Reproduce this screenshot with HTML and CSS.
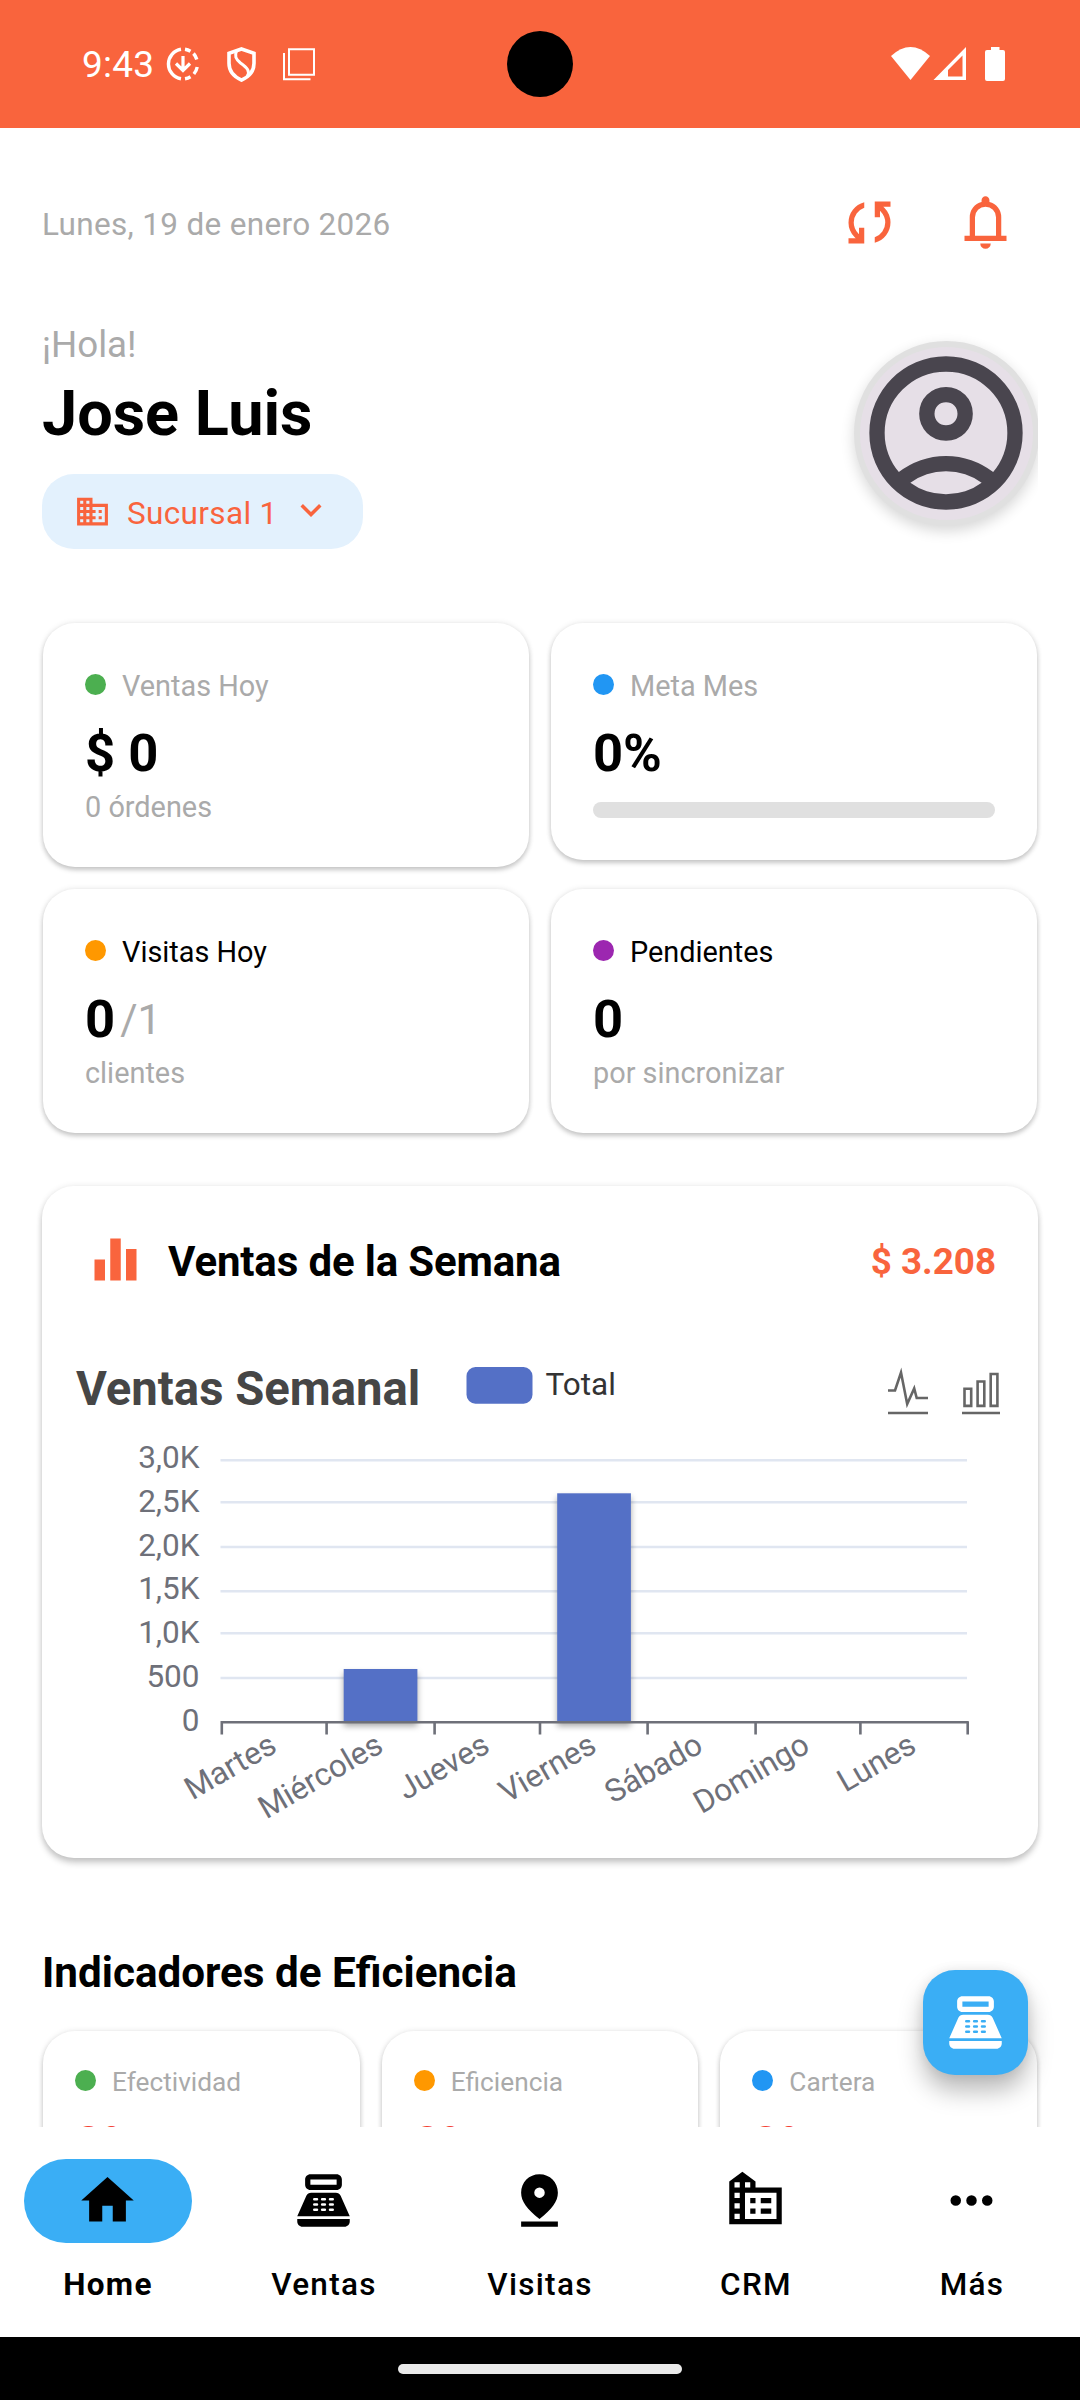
FILE: index.html
```html
<!DOCTYPE html>
<html lang="es">
<head>
    <meta charset="UTF-8">
    <meta name="viewport" content="width=device-width, initial-scale=1.0">
    <title>Home</title>
    <link rel="stylesheet" href="styles.css">
</head>

<body>
<!-- shared icons -->
<svg class="sprite">
    <symbol id="pos" viewBox="0 0 24 24">
        <path fill-rule="evenodd" d="M17 2H7c-1.1 0-2 .9-2 2v2c0 1.1.9 2 2 2h10c1.1 0 2-.9 2-2V4c0-1.1-.9-2-2-2zm0 4H7V4h10v2zM20 22H4c-1.1 0-2-.9-2-2v-1h20v1c0 1.1-.9 2-2 2zM18.53 10.19C18.21 9.47 17.49 9 16.7 9H7.3c-.79 0-1.51.47-1.83 1.19L2 18h20zM8.5 11h1a.5.5 0 0 1 0 1h-1a.5.5 0 0 1 0-1zm3 0h1a.5.5 0 0 1 0 1h-1a.5.5 0 0 1 0-1zm3 0h1a.5.5 0 0 1 0 1h-1a.5.5 0 0 1 0-1zm-6 2h1a.5.5 0 0 1 0 1h-1a.5.5 0 0 1 0-1zm3 0h1a.5.5 0 0 1 0 1h-1a.5.5 0 0 1 0-1zm3 0h1a.5.5 0 0 1 0 1h-1a.5.5 0 0 1 0-1zm-6 2h1a.5.5 0 0 1 0 1h-1a.5.5 0 0 1 0-1zm3 0h1a.5.5 0 0 1 0 1h-1a.5.5 0 0 1 0-1zm3 0h1a.5.5 0 0 1 0 1h-1a.5.5 0 0 1 0-1z"/>
    </symbol>
</svg>

<header class="status-bar">
    <span class="clock">9:43</span>
    <svg class="status-left" width="150" height="36" viewBox="166 47 150 36" fill="none" stroke="#fff">
        <path stroke-width="3.4" d="M181 50.2a15 15 0 0 0 0 29.6M185 50.2a15 15 0 0 1 5.5 2M193.500 54.500a15 15 0 0 1 3.300 6M197.200 68a15 15 0 0 1-3.300 7M190.500 77.800a15 15 0 0 1-5.500 2"/>
        <path stroke-width="3.2" d="M183 57v14M176 64.500l7 7 7-7"/>
        <path stroke-width="3.600" d="M241.500 50l12.500 4.300v10c0 8.200-5 13.500-12.500 16.800-7.500-3.300-12.500-8.600-12.500-16.800v-10z"/>
        <path stroke-width="3" d="M236.500 52c-2 5-1 8 4 12 7 5 9.500 8 7 13"/>
        <path stroke-width="2" d="M289 50.300h25v25.400h-25zM284 54v26.300h26.500"/>
    </svg>
    <span class="cutout"></span>
    <svg class="status-right" width="116" height="36" viewBox="890 46 116 36" fill="#fff">
        <path d="M891 56q19.500-18 39 0L910.500 80z"/>
        <path fill-rule="evenodd" d="M933.500 80L966 47v33zM948 76.500h14.500V55.500L948 70z"/>
        <path d="M991 47h8.500v3h3.500q2 0 2 2v27q0 2-2 2h-16q-2 0-2-2V52q0-2 2-2h4z"/>
    </svg>
</header>

<main>
    <div class="top-row">
        <p class="date">Lunes, 19 de enero 2026</p>
        <div class="actions">
            <svg class="icon" viewBox="0 0 24 24"><path d="M4 20v-2h2.750l-.4-.350q-1.225-1.225-1.787-2.662T4 12.050q0-2.775 1.663-4.938T10 4.250v2.100Q8.200 7 7.100 8.563T6 12q0 1.125.425 2.188T7.750 16.200l.250.250V14h2v6zm10-.250v-2.100q1.800-.650 2.900-2.212T18 12q0-1.125-.425-2.187T16.250 7.800L16 7.550V10h-2V4h6v2h-2.750l.4.350q1.225 1.225 1.788 2.663T20 11.950q0 2.775-1.662 4.938T14 19.750"/></svg>
            <svg class="icon" viewBox="0 0 24 24"><path d="M4 19v-2h2v-7q0-2.075 1.250-3.687T10.500 4.200v-.7q0-.625.438-1.062T12 2t1.063.438T13.500 3.500v.7q2 .5 3.250 2.113T18 10v7h2v2zm8 3q-.825 0-1.412-.587T10 20h4q0 .825-.587 1.413T12 22m-4-5h8v-7q0-1.650-1.175-2.825T12 6 9.175 7.175 8 10z"/></svg>
        </div>
    </div>

    <div class="greeting">
        <div>
            <p class="hello">¡Hola!</p>
            <h1>Jose Luis</h1>
            <div class="branch">
                <svg class="branch-icon" viewBox="0 0 24 24"><path d="M12 7V3H2v18h20V7H12zM6 19H4v-2h2v2zm0-4H4v-2h2v2zm0-4H4V9h2v2zm0-4H4V5h2v2zm4 12H8v-2h2v2zm0-4H8v-2h2v2zm0-4H8V9h2v2zm0-4H8V5h2v2zm10 12h-8v-2h2v-2h-2v-2h2v-2h-2V9h8v10zm-2-8h-2v2h2v-2zm0 4h-2v2h2v-2z"/></svg>
                <span>Sucursal 1</span>
                <svg class="branch-arrow" viewBox="0 0 24 24"><path d="M7.410 8.590L12 13.170l4.590-4.580L18 10l-6 6-6-6z"/></svg>
            </div>
        </div>
        <div class="avatar">
            <svg viewBox="0 0 24 24"><path d="M5.850 17.100q1.275-.975 2.850-1.538T12 15t3.300.563 2.850 1.537q.875-1.025 1.363-2.325T20 12q0-3.325-2.337-5.663T12 4 6.337 6.338 4 12q0 1.475.488 2.775T5.850 17.100M12 13q-1.475 0-2.488-1.012T8.500 9.500t1.013-2.488T12 6t2.488 1.013T15.500 9.500t-1.012 2.488T12 13m0 9q-2.075 0-3.900-.788t-3.175-2.137-2.137-3.175T2 12t.788-3.900 2.137-3.175T8.100 2.788 12 2t3.900.788 3.175 2.137T21.213 8.100 22 12t-.788 3.900-2.137 3.175-3.175 2.138T12 22m0-2q1.325 0 2.500-.387t2.150-1.113q-.975-.725-2.150-1.112T12 17t-2.500.388-2.150 1.112q.975.725 2.150 1.113T12 20m0-9q.650 0 1.075-.425T13.500 9.500t-.425-1.075T12 8t-1.075.425T10.500 9.500t.425 1.075T12 11"/></svg>
        </div>
    </div>

    <section class="stats">
        <div class="card">
            <p class="label muted"><span class="dot green"></span>Ventas Hoy</p>
            <p class="value">$ 0</p>
            <p class="sub">0 órdenes</p>
        </div>
        <div class="card short">
            <p class="label muted"><span class="dot blue"></span>Meta Mes</p>
            <p class="value">0%</p>
            <div class="progress"></div>
        </div>
        <div class="card">
            <p class="label"><span class="dot orange"></span>Visitas Hoy</p>
            <p class="value">0<span class="of">/1</span></p>
            <p class="sub">clientes</p>
        </div>
        <div class="card">
            <p class="label"><span class="dot purple"></span>Pendientes</p>
            <p class="value">0</p>
            <p class="sub">por sincronizar</p>
        </div>
    </section>

    <section class="week">
        <div class="week-header">
            <svg class="icon" viewBox="0 0 24 24"><path d="M4 12h4v8H4zM10 4h4v16h-4zM16 8h4v12h-4z"/></svg>
            <h2>Ventas de la Semana</h2>
            <span class="total">$ 3.208</span>
        </div>
        <svg class="chart" width="996" height="500" viewBox="0 0 996 500">
            <text class="chart-title" x="34" y="65">Ventas Semanal</text>
            <rect x="424.500" y="27" width="66" height="36.700" rx="9" fill="#5470c6"/>
            <text class="legend" x="503.500" y="54.700">Total</text>

            <!-- toolbox: line / bar -->
            <g class="tools">
                <path d="M846 50.500h7l6-18 6.200 31.500 7-15.500 2.500 9.500H886M846 73h40"/>
                <path d="M922.500 48.700h6.700v17.200h-6.700zM935.600 41.500h6.700v24.400h-6.700zM948.700 34h6.700v31.900h-6.700zM920 73h38"/>
            </g>

            <g class="grid">
                <path d="M178.500 120.300H925M178.500 162.300H925M178.500 207H925M178.500 251.300H925M178.500 293.300H925M178.500 338H925"/>
            </g>
            <g class="bars">
                <rect x="301.700" y="329" width="73.700" height="53"/>
                <rect x="515.200" y="153.300" width="73.700" height="228.700"/>
            </g>
            <path class="axis" d="M178.500 382.300H926.800M179.800 382v12.500M284.600 382v12.500M392.600 382v12.500M498 382v12.500M605.600 382v12.500M713.600 382v12.500M818.400 382v12.500M925.700 382v12.500"/>

            <g class="y-labels">
                <text x="157.500" y="127.700">3,0K</text>
                <text x="157.500" y="171.700">2,5K</text>
                <text x="157.500" y="215.700">2,0K</text>
                <text x="157.500" y="259.400">1,5K</text>
                <text x="157.500" y="303">1,0K</text>
                <text x="157.500" y="346.700">500</text>
                <text x="157.500" y="391">0</text>
            </g>
            <g class="x-labels">
                <text transform="translate(232 403) rotate(-30)" dy="9">Martes</text>
                <text transform="translate(338.600 403) rotate(-30)" dy="9">Miércoles</text>
                <text transform="translate(445.200 403) rotate(-30)" dy="9">Jueves</text>
                <text transform="translate(551.800 403) rotate(-30)" dy="9">Viernes</text>
                <text transform="translate(658.400 403) rotate(-30)" dy="9">Sábado</text>
                <text transform="translate(765 403) rotate(-30)" dy="9">Domingo</text>
                <text transform="translate(871.600 403) rotate(-30)" dy="9">Lunes</text>
            </g>
        </svg>
    </section>

    <h2 class="section-title">Indicadores de Eficiencia</h2>
    <section class="indicators">
        <div class="card small">
            <p class="label muted"><span class="dot green"></span>Efectividad</p>
            <p class="value red">0%</p>
        </div>
        <div class="card small">
            <p class="label muted"><span class="dot orange"></span>Eficiencia</p>
            <p class="value red">0%</p>
        </div>
        <div class="card small">
            <p class="label muted"><span class="dot blue"></span>Cartera</p>
            <p class="value red">0%</p>
        </div>
    </section>

    <button class="fab"><svg class="icon"><use href="#pos"/></svg></button>
</main>

<nav>
    <a class="nav-item active">
        <span class="pill"><svg class="icon" viewBox="0 0 24 24"><path d="M10 20v-6h4v6h5v-8h3L12 3 2 12h3v8z"/></svg></span>
        Home
    </a>
    <a class="nav-item">
        <span class="pill"><svg class="icon"><use href="#pos"/></svg></span>
        Ventas
    </a>
    <a class="nav-item">
        <span class="pill"><svg class="icon" viewBox="0 0 24 24"><path fill-rule="evenodd" d="M12 2C8 2 5 5.100 5 9c0 3.300 2.300 6.300 7 10 4.700-3.700 7-6.700 7-10 0-3.900-3-7-7-7zm0 5a2 2 0 1 1 0 4 2 2 0 0 1 0-4zM5 20h14v2H5z"/></svg></span>
        Visitas
    </a>
    <a class="nav-item">
        <span class="pill"><svg class="icon" viewBox="0 0 24 24"><path fill-rule="evenodd" d="M2 21V4.800L7 1l5 3.800V7h10v14zM4 5v2h2V5zm4 0v2h2V5zM4 9v2h2V9zm0 4v2h2v-2zm0 4v2h2v-2zM8 9v10h12V9zm2 2h2v2h-2zm4 0h4v2h-4zm-4 4h2v2h-2zm4 0h4v2h-4z"/></svg></span>
        CRM
    </a>
    <a class="nav-item">
        <span class="pill"><svg class="icon" viewBox="0 0 24 24"><path d="M4 12a2 2 0 1 0 4 0 2 2 0 0 0-4 0zM10 12a2 2 0 1 0 4 0 2 2 0 0 0-4 0zM16 12a2 2 0 1 0 4 0 2 2 0 0 0-4 0z"/></svg></span>
        Más
    </a>
</nav>
<footer><span class="handle"></span></footer>
</body>
</html>
```
FILE: styles.css
```css
:root {
    --primary: #f9643d;
    --accent: #3aaef5;
    --muted: #aaaaaa;
    --shadow: 0 3px 5px rgba(0, 0, 0, .2), 0 0 6px rgba(0, 0, 0, .09);
}
* {
    box-sizing: border-box;
}
body {
    margin: 0;
    width: 1080px;
    height: 2400px;
    overflow: hidden;
    display: flex;
    flex-direction: column;
    background: #fff;
    color: #000;
    font-family: Roboto, sans-serif;
    font-size: 31.5px;
}
p, h1, h2 {
    margin: 0;
}
.sprite {
    display: none;
}
.icon {
    width: 63px;
    height: 63px;
    flex: none;
    fill: currentColor;
}

/* status bar */
.status-bar {
    position: relative;
    flex: none;
    height: 128px;
    padding: 0 74px 0 82px;
    display: flex;
    align-items: center;
    background: var(--primary);
    color: #fff;
}
.clock {
    width: 84px;
    font-size: 37px;
    letter-spacing: .2px;
}
.status-right {
    margin-left: auto;
}
.cutout {
    position: absolute;
    left: 507px;
    top: 31px;
    width: 66px;
    height: 66px;
    border-radius: 50%;
    background: #000;
}

main {
    position: relative;
    flex: none;
    height: 1999px;
    padding: 63px 42px 0;
    overflow: hidden;
}
.top-row {
    display: flex;
    justify-content: space-between;
    align-items: center;
    height: 63px;
}
.date {
    padding-top: 3px;
    color: var(--muted);
    letter-spacing: .32px;
}
.actions {
    display: flex;
    gap: 53px;
    padding-right: 21px;
    color: var(--primary);
}

/* greeting */
.greeting {
    display: flex;
    justify-content: space-between;
    margin-top: 68px;
    height: 227px;
    clip-path: inset(-40px 0 -40px -40px);
}
.hello {
    font-size: 36.75px;
    line-height: 45px;
    color: var(--muted);
}
h1 {
    margin-top: 9px;
    font-size: 63px;
    line-height: 75px;
    font-weight: 700;
}
.branch {
    display: flex;
    align-items: center;
    width: 321px;
    height: 75px;
    margin-top: 23px;
    padding-left: 32px;
    border-radius: 32px;
    background: #e3f1fd;
    color: var(--primary);
    fill: currentColor;
}
.branch span {
    padding-top: 3px;
    letter-spacing: .35px;
}
.branch-icon {
    width: 37px;
    height: 37px;
    margin-right: 16px;
}
.branch-arrow {
    width: 42px;
    height: 42px;
    margin: -3px 0 0 12px;
}
.avatar {
    width: 185px;
    height: 185px;
    margin: 19px -1px 0 0;
    border: 6px solid #e0e0e0;
    border-radius: 50%;
    background: #e6dfe7;
    box-shadow: 0 5px 14px rgba(0, 0, 0, .16);
}
.avatar svg {
    display: block;
    width: 184px;
    height: 184px;
    margin: -6px 0 0 -6.500px;
    fill: #49454e;
}

/* cards */
.stats {
    display: grid;
    grid-template-columns: 1fr 1fr;
    gap: 22px;
    margin: 74px 1px 0;
}
.card {
    height: 244px;
    padding: 43px 42px 0;
    border-radius: 32px;
    background: #fff;
    box-shadow: var(--shadow);
}
.card.short {
    height: 237px;
}
.label {
    display: flex;
    align-items: center;
    font-size: 28.875px;
    line-height: 41px;
}
.muted, .sub, .of {
    color: var(--muted);
}
.dot {
    width: 21px;
    height: 21px;
    margin: -4px 16px 0 0;
    border-radius: 50%;
}
.green { background: #4caf50; }
.blue { background: #2196f3; }
.orange { background: #ff9800; }
.purple { background: #9c27b0; }
.value {
    display: flex;
    align-items: center;
    margin-top: 15px;
    font-size: 52.5px;
    line-height: 63px;
    font-weight: 700;
}
.of {
    margin-left: 5px;
    font-size: 42px;
    font-weight: 400;
}
.sub {
    margin-top: 2px;
    font-size: 28.875px;
    line-height: 41px;
}
.progress {
    height: 16px;
    margin-top: 17px;
    border-radius: 8px;
    background: #e0e0e0;
}

/* weekly sales */
.week {
    height: 672px;
    margin-top: 53px;
    padding-top: 42px;
    border-radius: 32px;
    background: #fff;
    box-shadow: 0 5px 6px rgba(0, 0, 0, .2), 0 0 6px rgba(0, 0, 0, .09);
}
.week-header {
    display: flex;
    align-items: center;
    padding: 0 42px;
    color: var(--primary);
}
h2 {
    font-size: 42px;
    line-height: 56px;
    font-weight: 700;
}
.week-header h2 {
    margin: 4px 0 0 21px;
    color: #000;
    letter-spacing: -.15px;
}
.total {
    margin: 4px 0 0 auto;
    font-size: 36.75px;
    font-weight: 700;
}
.chart {
    display: block;
    margin-top: 49px;
}
.chart-title {
    font-size: 47.25px;
    font-weight: 700;
    fill: #464646;
}
.legend {
    fill: #333;
}
.tools {
    fill: none;
    stroke: #666;
    stroke-width: 2.6;
}
.grid {
    stroke: #e0e6f1;
    stroke-width: 2.6;
}
.bars {
    fill: #5470c6;
    filter: drop-shadow(0 4px 3px rgba(0, 0, 0, .35));
}
.axis {
    fill: none;
    stroke: #6e7079;
    stroke-width: 2.6;
}
.y-labels, .x-labels {
    fill: #6e7079;
    text-anchor: end;
}

/* efficiency */
.section-title {
    margin-top: 87px;
    font-size: 42.2px;
}
.indicators {
    display: grid;
    grid-template-columns: repeat(3, 1fr);
    gap: 22px;
    margin: 30px 1px 0;
}
.card.small {
    height: 200px;
    padding: 33px 32px 0;
}
.small .label {
    font-size: 26.25px;
    line-height: 37px;
}
.small .value {
    margin-top: 15px;
    font-size: 47.25px;
    line-height: 56px;
}
.red {
    color: #f44336;
}
.fab {
    position: absolute;
    right: 52px;
    bottom: 52px;
    display: grid;
    place-items: center;
    width: 105px;
    height: 105px;
    padding: 0;
    border: 0;
    border-radius: 32px;
    background: var(--accent);
    color: #fff;
    box-shadow: 0 16px 24px rgba(0, 0, 0, .27), 0 0 12px rgba(0, 0, 0, .08);
}

/* bottom navigation */
nav {
    flex: none;
    display: grid;
    grid-template-columns: repeat(5, 1fr);
    height: 210px;
    padding-top: 32px;
    background: #fff;
}
.nav-item {
    display: flex;
    flex-direction: column;
    align-items: center;
    gap: 21px;
    line-height: 42px;
    font-weight: 500;
    letter-spacing: 1.3px;
}
.pill {
    display: grid;
    place-items: center;
    width: 168px;
    height: 84px;
    padding: 0 1px 1px 0;
    border-radius: 42px;
}
.active {
    font-weight: 700;
}
.active .pill {
    background: var(--accent);
}
footer {
    flex: none;
    height: 63px;
    padding-top: 27px;
    background: #000;
}
.handle {
    display: block;
    width: 284px;
    height: 10px;
    margin: 0 auto;
    border-radius: 5px;
    background: #eaeaea;
}
```
